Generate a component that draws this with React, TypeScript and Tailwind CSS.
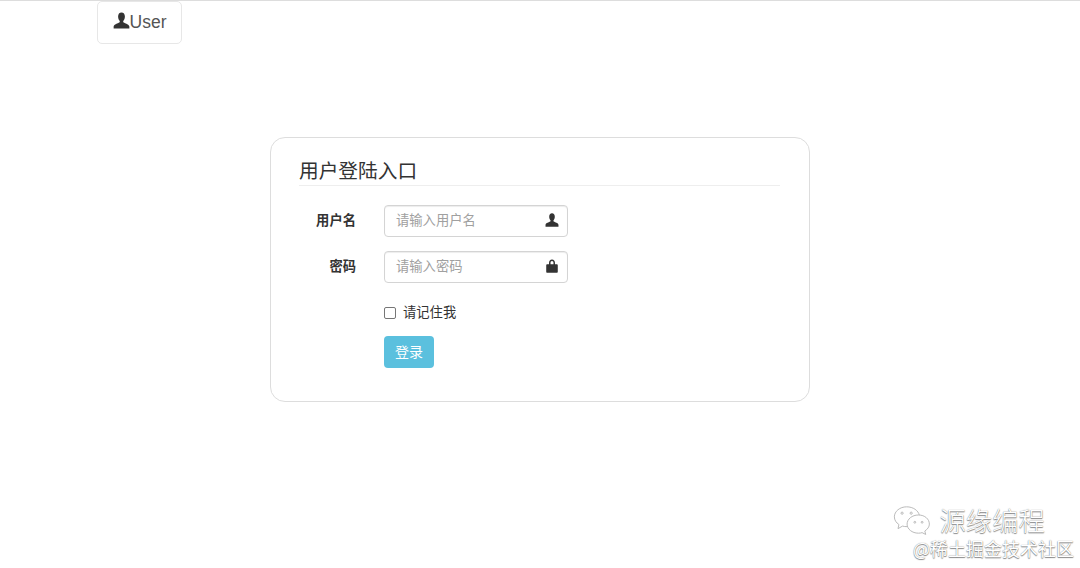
import React from 'react';

const UserIcon = ({ className }: { className?: string }) => (
  <svg className={className} viewBox="0 0 16 16" fill="currentColor">
    <path d="M8 0.4c-2 0-3.200 1.500-3.200 3.800 0 1.600 0.600 3.100 1.400 4 0.300 0.500 0.300 1.200-0.200 1.600C4.600 10.800 1 11.200 0.600 13.600V15.600h14.800v-2C15 11.200 11.400 10.800 10 9.800c-0.500-0.400-0.500-1.100-0.200-1.600 0.800-0.900 1.400-2.400 1.400-4C11.200 1.900 10 0.400 8 0.400z" />
  </svg>
);

const LockIcon = ({ className }: { className?: string }) => (
  <svg className={className} viewBox="0 0 16 16" fill="currentColor">
    <path d="M8 0.600C5.900 0.600 4.600 2.100 4.600 4.200V6H2.600C1.900 6 1.400 6.500 1.400 7.200v7.400c0 .7.500 1.200 1.200 1.200h10.800c.7 0 1.200-.5 1.200-1.200V7.200c0-.7-.5-1.200-1.200-1.200h-2V4.200C11.400 2.100 10.100 0.600 8 0.600zM6.300 6V4.200C6.300 3 6.900 2.200 8 2.200s1.700.8 1.700 2V6H6.300z" />
  </svg>
);

const WechatIcon = () => (
  <svg className="h-[30px] w-[42px]" viewBox="0 0 44 33" fill="white" stroke="#b4b4b4" strokeWidth="1">
    <path d="M15 2C7.500 2 1.500 7 1.500 13c0 3.500 2 6.500 5 8.500L5.500 26l5-2.800c1.500.4 3 .6 5 .6" />
    <path d="M15 2c7 0 13 4 14 9.500" />
    <path d="M28 11c-7 0-12.500 4.500-12.500 10S21 31 28 31c1.500 0 3-.2 4-.6l4 2-1-3.800c3-2 5-4.500 5-7.600C40 15.500 35 11 28 11z" />
    <circle cx="10" cy="9" r="1.200" />
    <circle cx="20" cy="9" r="1.200" />
    <circle cx="24" cy="19" r="1" />
    <circle cx="32" cy="19" r="1" />
  </svg>
);

const FormRow = ({ label, placeholder, icon }: { label: string; placeholder: string; icon: React.ReactNode }) => (
  <div className="flex items-center">
    <label className="w-[57px] text-right text-[13.3px] font-bold text-[#333]">{label}</label>
    <div className="relative ml-[28px] w-[184px]">
      <input
        type="text"
        placeholder={placeholder}
        className="h-[32px] w-full rounded-[4px] border border-[#d4d4d4] bg-white px-[11px] pb-[2px] text-[13.3px] text-[#555] shadow-[inset_0_1px_1px_rgba(0,0,0,0.075)] placeholder:text-[#a0a0a0]"
      />
      <span className="absolute top-[8px] right-[9px] text-[#333]">{icon}</span>
    </div>
  </div>
);

export default function App() {
  return (
    <div className="relative h-[568px] w-[1080px] overflow-hidden border-t border-[#ddd] bg-white font-['Liberation_Sans','Noto_Sans_CJK_SC',sans-serif] text-[#333]">
      <div className="pl-[97px]">
        <button
          type="button"
          className="flex h-[43px] w-[85px] items-center justify-center rounded-[5px] border border-[#e7e7e7] text-[17.5px] text-[#555]"
        >
          <UserIcon className="h-[17px] w-[17px] -translate-y-[2px] text-[#333]" />
          <span>User</span>
        </button>
      </div>

      {/* Login panel */}
      <div className="mx-auto mt-[93px] h-[265px] w-[540px] rounded-[15px] border border-[#ddd] pt-[19px] pr-[29px] pl-[28px]">
        <h2 className="h-[29px] border-b border-[#eee] text-[19.7px] leading-[28px] font-normal text-[#333]">
          用户登陆入口
        </h2>
        <div className="mt-[19px] flex flex-col gap-[14px]">
          <FormRow label="用户名" placeholder="请输入用户名" icon={<UserIcon className="h-[14px] w-[14px]" />} />
          <FormRow label="密码" placeholder="请输入密码" icon={<LockIcon className="h-[14px] w-[14px]" />} />
        </div>
        <div className="mt-[20px] ml-[85px] flex h-[20px] items-center text-[13.3px]">
          <input type="checkbox" className="h-[12px] w-[12px] appearance-none rounded-[2px] border border-[#767676] bg-white" />
          <span className="ml-[7px]">请记住我</span>
        </div>
        <button
          type="button"
          className="mt-[13px] ml-[85px] h-[32px] w-[50px] rounded-[4px] bg-[#5bc0de] text-[14px] text-white"
        >
          登录
        </button>
      </div>

      {/* Watermark */}
      <div className="absolute top-[503px] right-[6px] flex flex-col items-end font-['Noto_Sans_CJK_SC',sans-serif] text-white">
        <div className="flex items-center pr-[29px]">
          <WechatIcon />
          <span className="ml-[5px] text-[26.4px] leading-[32px] font-light [text-shadow:0_0_1px_#777,0_1px_1px_#888]">源缘编程</span>
        </div>
        <div className="text-[18px] leading-[24px] [text-shadow:0_0_1px_#777,0_1px_1px_#888]">@稀土掘金技术社区</div>
      </div>
    </div>
  );
}
